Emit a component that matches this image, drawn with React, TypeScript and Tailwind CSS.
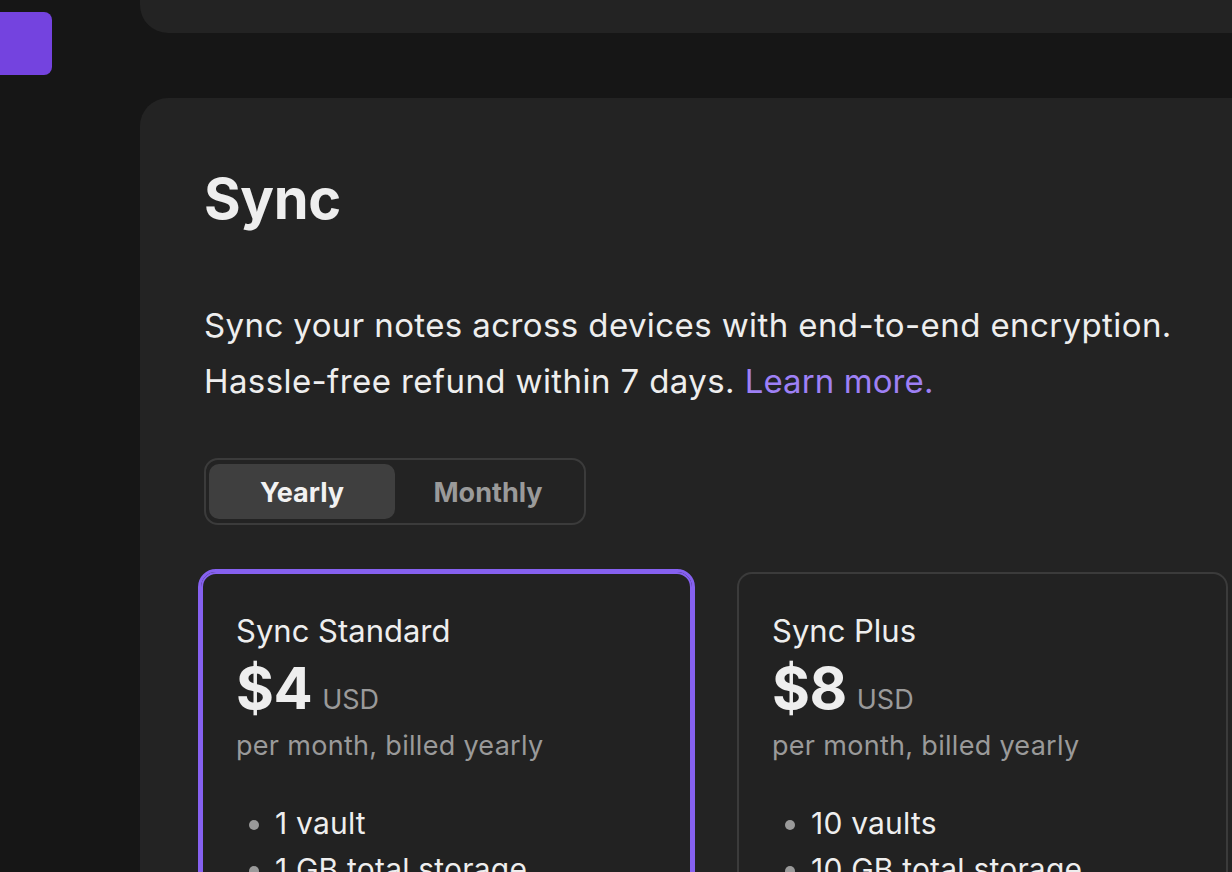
import React from "react";

const font = { fontFamily: "Inter, 'Noto Sans', sans-serif" };

function PlanCard({
  name,
  price,
  features,
  selected,
}: {
  name: string;
  price: string;
  features: string[];
  selected?: boolean;
}) {
  return (
    <div
      className={
        selected
          ? "h-[340px] rounded-[15px] border-2 border-[#8661f0] outline-[3px] outline-solid outline-[#8661f0] bg-[#222222] px-[33px] pt-[39px]"
          : "h-[340px] rounded-[15px] border-2 border-[#3b3b3b] bg-[#222222] px-[33px] pt-[39px]"
      }
    >
      <div className="text-[31px] leading-[36px] text-[#eeeeee]">{name}</div>
      <div className="flex items-baseline mt-[8px]">
        <span className="text-[58px] leading-[62px] font-bold text-[#eeeeee] tracking-[-0.5px]">{price}</span>
        <span className="ml-[10px] text-[27px] text-[#9a9a9a]">USD</span>
      </div>
      <div className="text-[27px] leading-[36px] tracking-[0.3px] text-[#9a9a9a] mt-[7px]">per month, billed yearly</div>
      <ul className="list-disc pl-[39px] mt-[36px] marker:text-[#9a9a9a]">
        {features.map((f) => (
          <li key={f} className="text-[30px] leading-[46px] tracking-[0.2px] text-[#eeeeee]">
            {f}
          </li>
        ))}
      </ul>
    </div>
  );
}

export default function App() {
  return (
    <div className="w-[1232px] h-[872px] overflow-hidden bg-[#161616] flex" style={font}>
      <aside className="w-[140px] shrink-0 pt-[12px]">
        <div className="w-[60px] h-[63px] -ml-[8px] rounded-[8px] bg-[#7443df]" />
      </aside>
      <main className="flex-1 min-w-0 flex flex-col gap-[65px]">
        <div className="h-[33px] w-[1200px] shrink-0 rounded-bl-[28px] bg-[#232323]" />
        <section className="w-[1200px] h-[900px] shrink-0 rounded-tl-[28px] bg-[#232323] pl-[64px] pt-[72px]">
          <h1 className="text-[56px] leading-[58px] font-bold text-[#eeeeee] tracking-[-0.3px]">Sync</h1>
          <p className="mt-[69px] text-[33px] leading-[56px] tracking-[0.4px] text-[#eeeeee]">
            Sync your notes across devices with end-to-end encryption.
            <br />
            Hassle-free refund within 7 days.{" "}
            <span className="text-[#9e80f5] tracking-[0.1px]">Learn more.</span>
          </p>
          <div className="mt-[49px] inline-flex rounded-[14px] border-2 border-[#3b3b3b] px-[3px] py-[4px]">
            <button className="w-[186px] h-[55px] pt-[3px] rounded-[10px] bg-[#3f3f3f] text-[27px] font-bold text-[#f2f2f2]">
              Yearly
            </button>
            <button className="w-[186px] h-[55px] pt-[3px] rounded-[10px] text-[27px] font-bold text-[#9a9a9a]">
              Monthly
            </button>
          </div>
          <div className="mt-[47px] -ml-[3px] grid grid-cols-[491px_491px] gap-[45px]">
            <PlanCard
              name="Sync Standard"
              price="$4"
              selected
              features={["1 vault", "1 GB total storage", "Version history for 1 month"]}
            />
            <PlanCard
              name="Sync Plus"
              price="$8"
              features={["10 vaults", "10 GB total storage", "Version history for 12 months"]}
            />
          </div>
        </section>
      </main>
    </div>
  );
}
